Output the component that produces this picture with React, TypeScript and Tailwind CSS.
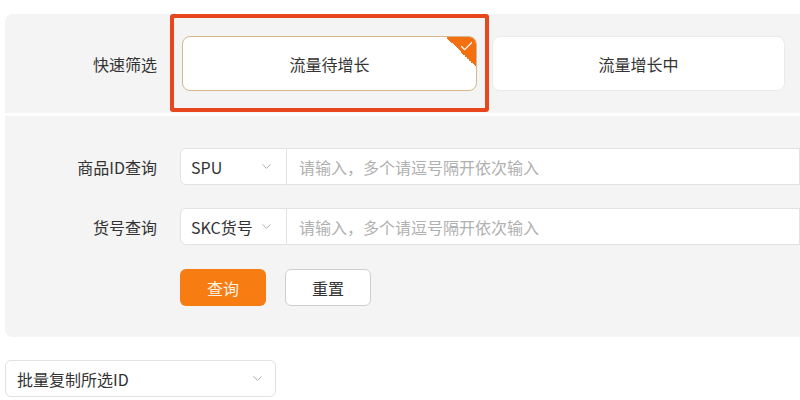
import { ChevronDown, Check } from 'lucide-react'

const font = { fontFamily: '"Noto Sans CJK SC", "Noto Sans", sans-serif' }

function FilterCard({ label, active }: { label: string; active?: boolean }) {
  return (
    <div
      className={`relative flex h-[55px] items-center justify-center overflow-hidden rounded-lg bg-white text-[16px] text-[#333] ${
        active ? 'w-[295px] border border-[#d8b68c]' : 'w-[293px] border border-[#ebebeb]'
      }`}
    >
      {label}
      {active && (
        <div className="absolute right-0 top-0 h-[30px] w-[30px] bg-[linear-gradient(225deg,#f2700f_50%,transparent_50%)]">
          <Check className="absolute right-[2px] top-[2px] h-[15px] w-[15px] text-white" strokeWidth={2} />
        </div>
      )}
    </div>
  )
}

function QueryRow({ label, select }: { label: string; select: string }) {
  return (
    <div className="flex items-center">
      <div className="w-[152px] text-right text-[16px] text-[#333]">{label}</div>
      <div className="ml-[23px] flex h-[37px] flex-1">
        <div className="flex w-[107px] items-center justify-between rounded-l-md border border-[#e2e2e2] bg-white pl-[10px] pr-[12px] text-[16px] text-[#333]">
          <span>{select}</span>
          <ChevronDown className="h-[15px] w-[15px] text-[#a8a8a8]" strokeWidth={1.5} />
        </div>
        <div className="flex flex-1 items-center border border-l-0 border-[#e2e2e2] bg-white pl-[12px] text-[16px] text-[#b0b0b0]">
          请输入，多个请逗号隔开依次输入
        </div>
      </div>
    </div>
  )
}

export default function App() {
  return (
    <div className="h-[400px] w-[800px] overflow-hidden bg-white" style={font}>
      <div className="pl-[5px] pt-[14px]">
        {/* 快速筛选 */}
        <div className="flex h-[99px] items-start rounded-tl-lg bg-[#f4f4f4] pt-[22px]">
          <div className="flex h-[55px] w-[152px] items-center justify-end text-[16px] text-[#333]">快速筛选</div>
          <div className="relative ml-[25px] flex gap-[15px]">
            <FilterCard label="流量待增长" active />
            <FilterCard label="流量增长中" />
            {/* 标注框 */}
            <div className="pointer-events-none absolute left-[-12px] top-[-22px] h-[98px] w-[319px] rounded-[3px] border-[4px] border-[#e8461c]" />
          </div>
        </div>

        {/* 查询条件 */}
        <div className="mt-[3px] flex h-[221px] flex-col gap-[23px] rounded-bl-lg bg-[#f4f4f4] pt-[32px]">
          <QueryRow label="商品ID查询" select="SPU" />
          <QueryRow label="货号查询" select="SKC货号" />
          <div className="ml-[175px] flex gap-[19px] pt-[1px]">
            <button className="h-[37px] w-[86px] rounded-md bg-[#f77c12] text-[16px] text-[#fff1e2]">查询</button>
            <button className="h-[37px] w-[86px] rounded-md border border-[#cfcfcf] bg-white text-[16px] text-[#333]">
              重置
            </button>
          </div>
        </div>

        {/* 批量复制 */}
        <div className="mt-[23px] flex h-[37px] w-[271px] items-center justify-between rounded-md border border-[#e2e2e2] bg-white pl-[11px] pr-[10px] text-[16px] text-[#333]">
          <span>批量复制所选ID</span>
          <ChevronDown className="h-[15px] w-[15px] text-[#a8a8a8]" strokeWidth={1.5} />
        </div>
      </div>
    </div>
  )
}
